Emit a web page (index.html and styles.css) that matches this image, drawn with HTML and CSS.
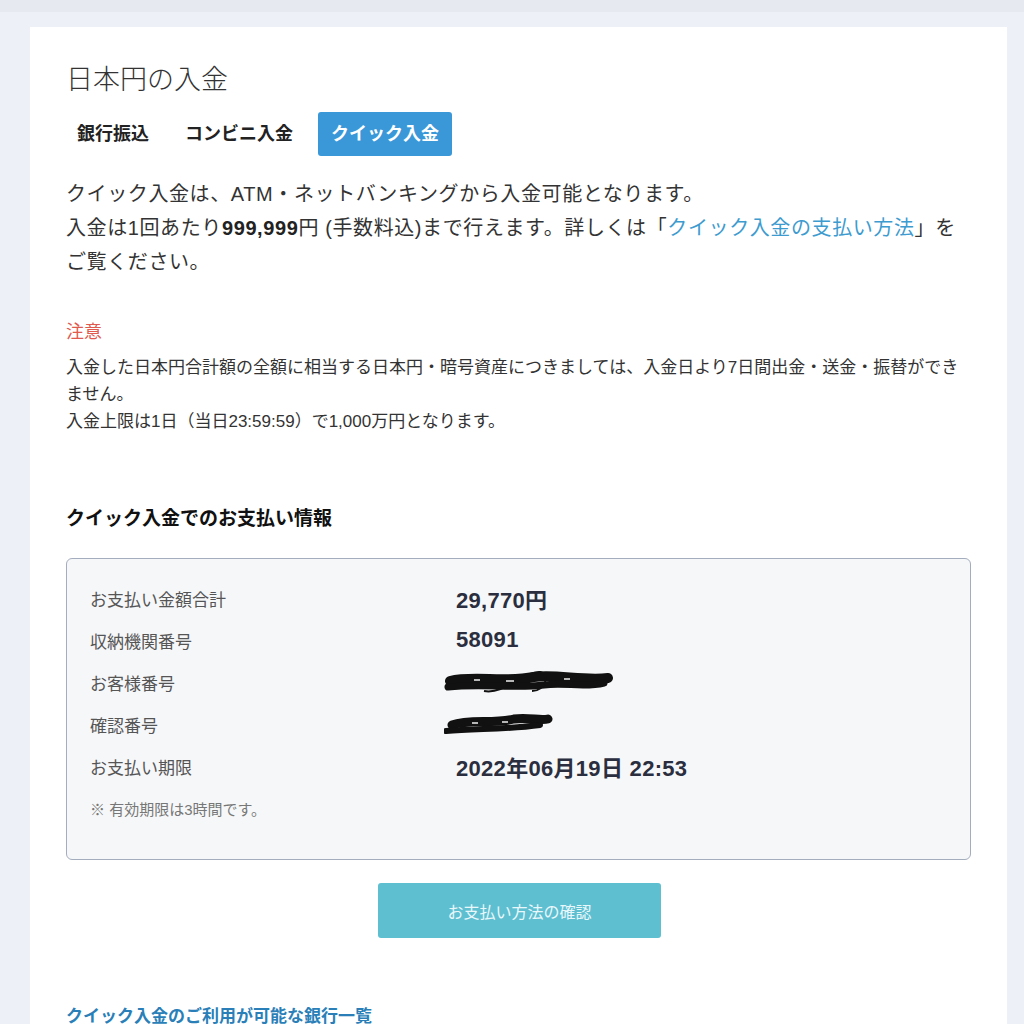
FILE: index.html
```html
<!DOCTYPE html>
<html lang="ja">
<head>
  <meta charset="UTF-8">
  <title>日本円の入金</title>
  <link rel="stylesheet" href="styles.css">
</head>
<body>
  <div class="topbar"></div>
  <div class="card">
    <h1 class="title">日本円の入金</h1>

    <!-- 入金方法タブ -->
    <div class="tabs">
      <span class="tab">銀行振込</span>
      <span class="tab">コンビニ入金</span>
      <span class="tab active">クイック入金</span>
    </div>

    <p class="lead">
      クイック入金は、ATM・ネットバンキングから入金可能となります。<br>
      入金は1回あたり<strong>999,999</strong>円 (手数料込)まで行えます。詳しくは「<a href="#" class="link">クイック入金の支払い方法</a>」をご覧ください。
    </p>

    <div class="notice">
      <h3 class="notice-title">注意</h3>
      <p class="notice-text">
        入金した日本円合計額の全額に相当する日本円・暗号資産につきましては、入金日より7日間出金・送金・振替ができません。<br>
        入金上限は1日（当日23:59:59）で1,000万円となります。
      </p>
    </div>

    <h2 class="section-title">クイック入金でのお支払い情報</h2>

    <div class="info-box">
      <div class="row">
        <span class="label">お支払い金額合計</span>
        <span class="value">29,770円</span>
      </div>
      <div class="row">
        <span class="label">収納機関番号</span>
        <span class="value">58091</span>
      </div>
      <div class="row">
        <span class="label">お客様番号</span>
        <span class="value redacted">
          <svg width="170" height="26" viewBox="0 0 170 26">
            <path d="M6 12 C30 6 60 14 90 8 C112 5 140 12 164 9" stroke="#111" stroke-width="10" fill="none" stroke-linecap="round"/>
            <path d="M4 18 C40 14 70 20 100 16 C120 13 140 19 160 14" stroke="#111" stroke-width="7" fill="none" stroke-linecap="round"/>
            <path d="M40 22 C60 26 80 2 96 3 C106 5 102 22 88 22" stroke="#111" stroke-width="2" fill="none"/>
            <path d="M30 11 L36 11 M62 12 L70 12 M120 10 L126 10" stroke="#eee" stroke-width="1.5"/>
          </svg>
        </span>
      </div>
      <div class="row">
        <span class="label">確認番号</span>
        <span class="value redacted">
          <svg width="110" height="26" viewBox="0 0 110 26">
            <path d="M8 14 C25 8 50 13 70 8 C85 6 96 10 104 8" stroke="#111" stroke-width="9" fill="none" stroke-linecap="round"/>
            <path d="M2 20 C30 17 60 19 96 14" stroke="#111" stroke-width="6" fill="none" stroke-linecap="round"/>
            <path d="M28 12 L34 12 M58 11 L64 11" stroke="#eee" stroke-width="1.5"/>
          </svg>
        </span>
      </div>
      <div class="row">
        <span class="label">お支払い期限</span>
        <span class="value">2022年06月19日 22:53</span>
      </div>
      <div class="row note">※ 有効期限は3時間です。</div>
    </div>

    <div class="actions">
      <button class="confirm-btn">お支払い方法の確認</button>
    </div>

    <h2 class="bank-title">クイック入金のご利用が可能な銀行一覧</h2>
  </div>
</body>
</html>
```

FILE: styles.css
```css
html, body {
  margin: 0;
  padding: 0;
}
body {
  font-family: "Liberation Sans", "Noto Sans CJK JP", sans-serif;
  background-color: #eef0f7;
  color: #333;
  height: 1024px;
  overflow: hidden;
}
.topbar {
  height: 12px;
  background-color: #e6e9f0;
}
.card {
  background-color: #fff;
  margin: 15px 17px 0 30px;
  padding: 34px 36px 40px 36px;
  min-height: 1000px;
}
.title {
  margin: 0;
  font-size: 27px;
  font-weight: 300;
  line-height: 38px;
  color: #333;
}
.tabs {
  display: flex;
  gap: 14px;
  margin-top: 13px;
}
.tab {
  padding: 0 11px;
  height: 44px;
  line-height: 44px;
  font-size: 18px;
  font-weight: bold;
  color: #222;
  border-radius: 3px;
}
.tab.active {
  background-color: #3a97d8;
  color: #fff;
  padding: 0 13px;
}
.lead {
  margin: 21px 0 0 0;
  font-size: 20px;
  line-height: 34px;
  letter-spacing: 0.6px;
}
.lead strong {
  color: #222;
}
.link {
  color: #3d9bcf;
  text-decoration: none;
}
.notice {
  margin-top: 40px;
}
.notice-title {
  margin: 0;
  font-size: 18px;
  font-weight: normal;
  line-height: 26px;
  color: #e05a4f;
}
.notice-text {
  margin: 9px 0 0 0;
  font-size: 17px;
  line-height: 27px;
  color: #333;
}
.section-title {
  margin: 70px 0 0 0;
  font-size: 19px;
  line-height: 28px;
  font-weight: bold;
  color: #111;
}
.info-box {
  margin-top: 25px;
  border: 1px solid #a4adbe;
  border-radius: 6px;
  background-color: #f6f7f9;
  padding: 18px 23px 30px 23px;
}
.row {
  display: flex;
  align-items: center;
  height: 42px;
}
.label {
  width: 366px;
  font-size: 17px;
  color: #555;
}
.value {
  font-size: 22px;
  font-weight: bold;
  letter-spacing: 0.3px;
  color: #2a2e3e;
}
.redacted {
  display: flex;
  margin-left: -12px;
}
.note {
  font-size: 15px;
  color: #777;
}
.actions {
  display: flex;
  justify-content: center;
  margin-top: 23px;
}
.confirm-btn {
  width: 283px;
  height: 55px;
  border: none;
  border-radius: 3px;
  background-color: #5ebfd1;
  color: #eaf7fa;
  font-family: inherit;
  font-size: 16px;
  margin-left: 2px;
}
.bank-title {
  margin: 67px 0 0 0;
  font-size: 17px;
  line-height: 24px;
  font-weight: bold;
  color: #2a7fb8;
}
```
